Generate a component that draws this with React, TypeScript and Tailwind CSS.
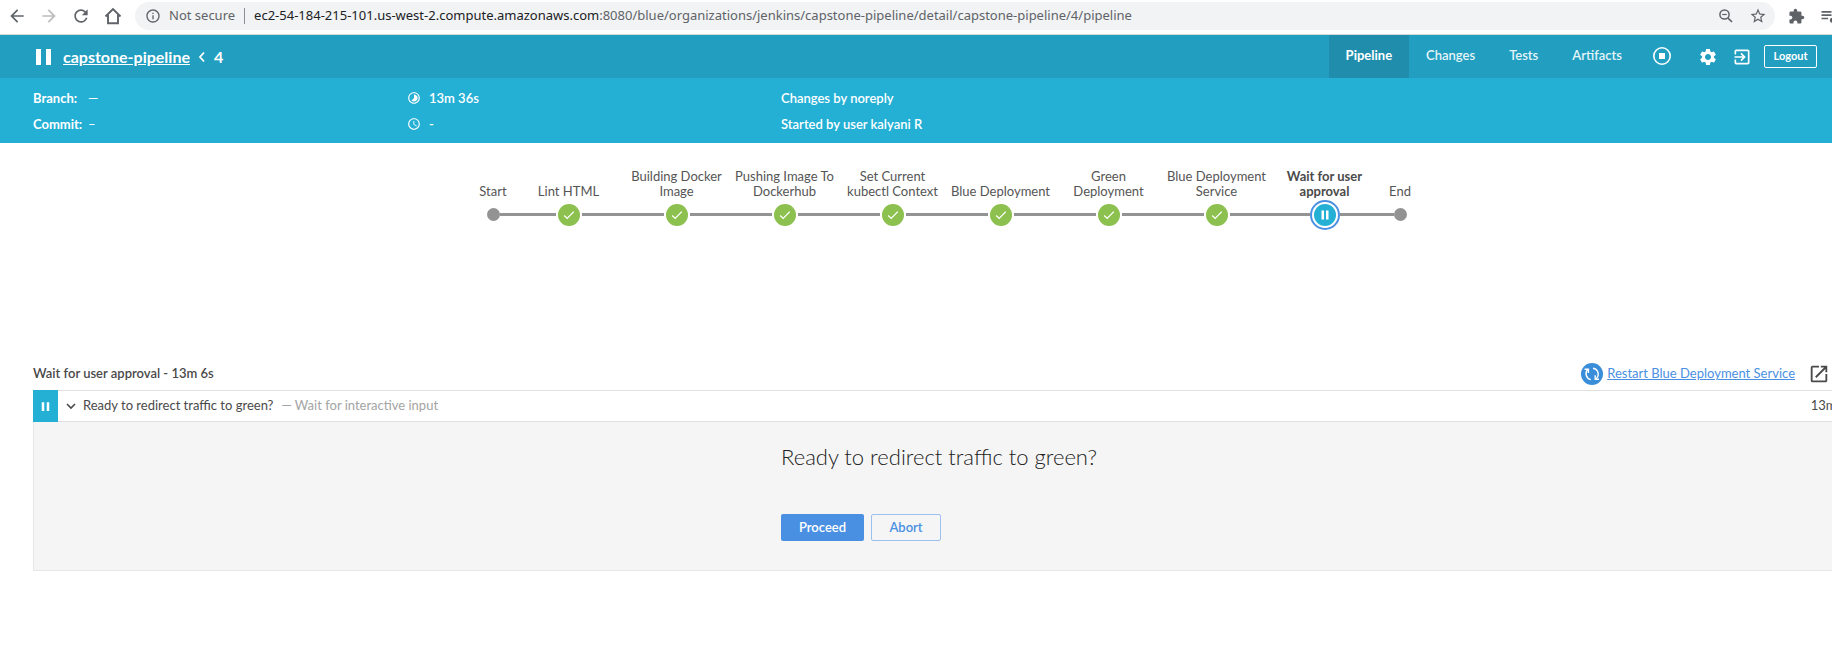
import type { ReactNode } from 'react';
import {
  MdArrowBack,
  MdArrowForward,
  MdRefresh,
  MdInfoOutline,
  MdStarBorder,
  MdExtension,
  MdTimelapse,
  MdAccessTime,
  MdSettings,
  MdExitToApp,
  MdPause,
  MdOpenInNew,
  MdQueueMusic,
} from 'react-icons/md';

type StageState = 'endpoint' | 'success' | 'paused';

interface Stage {
  name: string;
  state: StageState;
}

const stages: Stage[] = [
  { name: 'Start', state: 'endpoint' },
  { name: 'Lint HTML', state: 'success' },
  { name: 'Building Docker Image', state: 'success' },
  { name: 'Pushing Image To Dockerhub', state: 'success' },
  { name: 'Set Current kubectl Context', state: 'success' },
  { name: 'Blue Deployment', state: 'success' },
  { name: 'Green Deployment', state: 'success' },
  { name: 'Blue Deployment Service', state: 'success' },
  { name: 'Wait for user approval', state: 'paused' },
  { name: 'End', state: 'endpoint' },
];

function HomeIcon() {
  return (
    <svg viewBox="0 0 20 20" className="size-5" fill="none" aria-hidden="true">
      <path
        d="M2.500 10.500 10 3l7.500 7.500M5 9v8.200h10V9"
        stroke="currentColor"
        strokeWidth="1.900"
      />
    </svg>
  );
}

function ZoomOutIcon() {
  return (
    <svg viewBox="0 0 18 18" className="size-[18px]" fill="none" stroke="currentColor" aria-hidden="true">
      <circle cx="7.500" cy="7.500" r="4.600" strokeWidth="1.500" />
      <path d="M5.200 7.500h4.600" strokeWidth="1.200" />
      <path d="M10.800 10.800 15 15" strokeWidth="1.700" />
    </svg>
  );
}

function BrowserBar() {
  return (
    <div className="flex h-[35px] items-center border-b border-[#d5d8db] bg-white pt-[2px] pb-1 font-['Noto_Sans','Open_Sans',sans-serif] text-[#5f6368]">
      <div className="flex shrink-0 items-center gap-3 pl-[7px]">
        <button type="button" aria-label="Back"><MdArrowBack className="size-5" /></button>
        <button type="button" aria-label="Forward" className="text-[#babcbe]"><MdArrowForward className="size-5" /></button>
        <button type="button" aria-label="Reload"><MdRefresh className="size-5" /></button>
        <button type="button" aria-label="Home"><HomeIcon /></button>
      </div>
      <div className="ml-3 flex h-7 min-w-0 grow items-center rounded-full bg-[#f1f3f4] px-2">
        <MdInfoOutline className="ml-[2px] size-4 shrink-0" />
        <span className="ml-2 shrink-0 text-[13px]">Not secure</span>
        <span className="mx-[9px] h-4 w-px shrink-0 bg-[#8b8f93]" />
        <span className="grow truncate text-[13px]">
          <span className="text-[#202124]">ec2-54-184-215-101.us-west-2.compute.amazonaws.com</span>
          :8080/blue/organizations/jenkins/capstone-pipeline/detail/capstone-pipeline/4/pipeline
        </span>
        <button type="button" aria-label="Zoom"><ZoomOutIcon /></button>
        <button type="button" aria-label="Bookmark" className="ml-[14px]"><MdStarBorder className="size-[18px]" /></button>
      </div>
      <div className="flex w-[57px] shrink-0 items-center gap-[14px] overflow-hidden pl-[13px]">
        <button type="button" aria-label="Extensions" className="shrink-0"><MdExtension className="size-[17px]" /></button>
        <button type="button" aria-label="Media" className="shrink-0"><MdQueueMusic className="size-5" /></button>
      </div>
    </div>
  );
}

function StopIcon() {
  return (
    <svg viewBox="0 0 20 20" className="size-5" fill="none" aria-hidden="true">
      <circle cx="10" cy="10" r="8.2" stroke="currentColor" strokeWidth="1.6" />
      <rect x="7" y="7" width="6" height="6" fill="currentColor" />
    </svg>
  );
}

function Tab({ children, active = false }: { children: ReactNode; active?: boolean }) {
  return (
    <a
      href="#"
      className={
        active
          ? 'flex items-center bg-[#208dac] px-[17px] pb-[2px] font-bold'
          : 'flex items-center px-[17px] pb-[2px] font-semibold text-[#e4f4f9]'
      }
    >
      {children}
    </a>
  );
}

function RunHeader() {
  return (
    <header className="bg-[#24b0d5] text-[13px] text-white">
      <div className="flex h-[43px] items-stretch bg-[#219ec0]">
        <div className="flex grow items-center pl-[30px] text-base font-bold">
          <svg viewBox="0 0 26 24" className="h-6 w-[26px]" fill="currentColor" aria-hidden="true">
            <rect x="6" y="4" width="5" height="16" />
            <rect x="16" y="4" width="5" height="16" />
          </svg>
          <a href="#" className="ml-[7px] underline">capstone-pipeline</a>
          <svg viewBox="0 0 8 12" className="mx-2 h-3 w-2" fill="none" aria-hidden="true">
            <path d="M6 1.5 2 6l4 4.500" stroke="currentColor" strokeWidth="1.8" />
          </svg>
          <span>4</span>
        </div>
        <nav className="flex">
          <Tab active>Pipeline</Tab>
          <Tab>Changes</Tab>
          <Tab>Tests</Tab>
          <Tab>Artifacts</Tab>
        </nav>
        <div className="flex items-center pr-[15px] pl-[13px]">
          <button type="button" aria-label="Stop" className="pb-[2px]"><StopIcon /></button>
          <button type="button" aria-label="Administration" className="ml-[26px]"><MdSettings className="size-5" /></button>
          <button type="button" aria-label="Go to classic" className="ml-[14px]"><MdExitToApp className="size-5" /></button>
          <button type="button" className="ml-3 h-[23px] w-[53px] rounded-[2px] border border-white text-[11px] font-bold">Logout</button>
        </div>
      </div>
      <div className="grid h-[65px] grid-cols-[374px_374px_1fr] content-center gap-y-[6px] pl-[33px] leading-5">
        <div className="flex"><b className="w-[55px]">Branch:</b><span>—</span></div>
        <div className="flex items-center gap-2 font-semibold"><MdTimelapse className="size-[14px]" />13m 36s</div>
        <div className="font-semibold">Changes by noreply</div>
        <div className="flex"><b className="w-[55px]">Commit:</b><span>–</span></div>
        <div className="flex items-center gap-2 font-semibold"><MdAccessTime className="size-[14px]" />-</div>
        <div className="font-semibold">Started by user kalyani R</div>
      </div>
    </header>
  );
}

function StageNode({ state }: { state: StageState }) {
  if (state === 'endpoint') {
    return <span className="size-[13px] shrink-0 rounded-full bg-[#949393]" />;
  }
  if (state === 'paused') {
    return (
      <span className="flex size-[30px] shrink-0 items-center justify-center rounded-full border-2 border-[#4a90e2] bg-white">
        <span className="flex size-[22px] items-center justify-center rounded-full bg-[#24b0d5]">
          <svg viewBox="0 0 10 10" className="size-[10px]" fill="#fff" aria-hidden="true">
            <rect x="1.500" y="0.500" width="2.500" height="9" />
            <rect x="6" y="0.500" width="2.500" height="9" />
          </svg>
        </span>
      </span>
    );
  }
  return (
    <span className="mx-[2px] flex size-[22px] shrink-0 items-center justify-center rounded-full bg-[#8cc04f]">
      <svg viewBox="0 0 12 10" className="h-[10px] w-3" fill="none" aria-hidden="true">
        <path d="M1.200 5.500 4.200 8.400 10.800 1.600" stroke="#fff" strokeWidth="1.300" />
      </svg>
    </span>
  );
}

function PipelineGraph() {
  const last = stages.length - 1;
  return (
    <ol className="flex h-[215px] justify-center pt-[26px] text-[13px] leading-[15px] text-[#555]">
      {stages.map((stage, i) => (
        <li key={stage.name} className={stage.state === 'endpoint' ? 'w-[43px]' : 'w-[108px]'}>
          <div
            className={
              stage.state === 'paused'
                ? 'flex h-[30px] items-end justify-center px-1 text-center font-bold text-[#4a4a4a]'
                : 'flex h-[30px] items-end justify-center px-1 text-center'
            }
          >
            {stage.name}
          </div>
          <div className="flex h-[31px] items-center">
            <span className={i === 0 ? 'h-[3px] grow' : 'h-[3px] grow bg-[#949393]'} />
            <StageNode state={stage.state} />
            <span className={i === last ? 'h-[3px] grow' : 'h-[3px] grow bg-[#949393]'} />
          </div>
        </li>
      ))}
    </ol>
  );
}

function RestartIcon() {
  return (
    <svg viewBox="0 0 22 22" className="size-[22px]" fill="none" aria-hidden="true">
      <circle cx="11" cy="11" r="11" fill="#3a8dd8" />
      <g stroke="#fff" strokeWidth="1.400">
        <path d="M7 6.300A6 6 0 0 0 9.800 16.600" />
        <path d="M15 15.800A6 6 0 0 0 12 5.200" />
        <path d="M3.600 6.200H7.400V10" />
        <path d="M18 16.200H14.200V12.300" />
      </g>
    </svg>
  );
}

function Steps() {
  return (
    <section className="px-[33px] text-[13px] text-[#4a4a4a]">
      <div className="flex h-8 items-center pr-[30px]">
        <h2 className="grow font-semibold">Wait for user approval - 13m 6s</h2>
        <RestartIcon />
        <a href="#" className="ml-1 text-[#4a90e2] underline">Restart Blue Deployment Service</a>
        <a href="#" aria-label="Open in new tab" className="ml-[13px]"><MdOpenInNew className="size-[22px]" /></a>
      </div>
      <div className="flex h-8 items-stretch border-y border-[#e0e0e0]">
        <div className="-my-px flex w-[25px] items-center justify-center bg-[#24b0d5] text-white">
          <MdPause className="size-[15px]" />
        </div>
        <button type="button" className="flex grow items-center pb-px pl-2 text-left">
          <svg viewBox="0 0 10 8" className="h-2 w-[10px]" fill="none" aria-hidden="true">
            <path d="M1 2l4 4 4-4" stroke="currentColor" strokeWidth="1.600" />
          </svg>
          <span className="ml-[7px]">Ready to redirect traffic to green?</span>
          <span className="ml-2 text-[#a4a4a4]">— Wait for interactive input</span>
        </button>
        <span className="flex items-center pr-[7px] pb-px">13m 6s</span>
      </div>
      <form className="border-x border-b border-[#e6e6e6] bg-[#f5f5f5] pt-[19px] pb-[29px]">
        <div className="mx-auto w-[331px]">
          <h3 className="text-[22px] leading-8 font-light text-[#222]">Ready to redirect traffic to green?</h3>
          <div className="mt-[41px] flex gap-[7px] font-semibold">
            <button type="button" className="h-[27px] w-[83px] rounded-[2px] bg-[#4a90e2] text-white">Proceed</button>
            <button type="button" className="h-[27px] w-[70px] rounded-[2px] border border-[#9cc1ef] text-[#4a90e2]">Abort</button>
          </div>
        </div>
      </form>
    </section>
  );
}

export default function App() {
  return (
    <div className="min-h-screen overflow-x-hidden bg-white font-['Lato',sans-serif]">
      <BrowserBar />
      <RunHeader />
      <main className="w-[calc(100%+61px)]">
        <PipelineGraph />
        <Steps />
      </main>
    </div>
  );
}
